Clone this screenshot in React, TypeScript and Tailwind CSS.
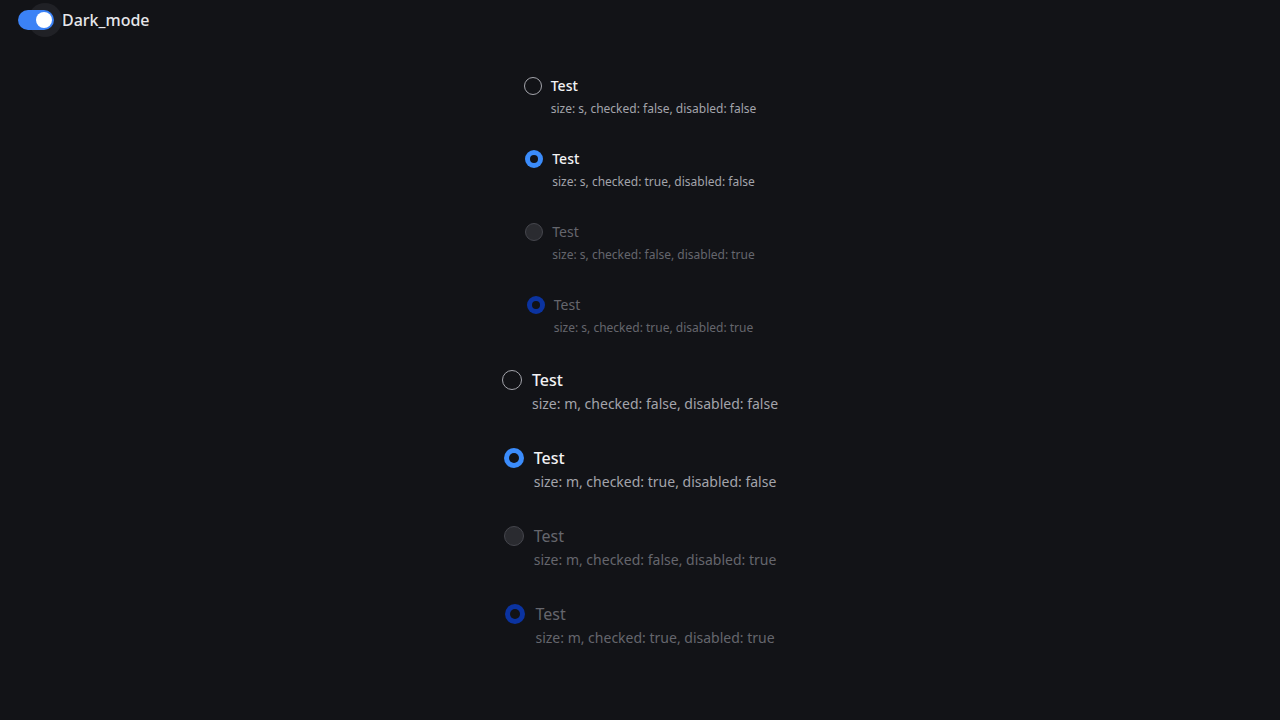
import React from "react";

type Size = "s" | "m";

const items: { size: Size; checked: boolean; disabled: boolean }[] = [
  { size: "s", checked: false, disabled: false },
  { size: "s", checked: true, disabled: false },
  { size: "s", checked: false, disabled: true },
  { size: "s", checked: true, disabled: true },
  { size: "m", checked: false, disabled: false },
  { size: "m", checked: true, disabled: false },
  { size: "m", checked: false, disabled: true },
  { size: "m", checked: true, disabled: true },
];

function Circle({ size, checked, disabled }: { size: Size; checked: boolean; disabled: boolean }) {
  const dim = size === "s" ? "w-[18px] h-[18px] mt-px" : "w-5 h-5 mt-[2px]";
  if (checked) {
    return (
      <span
        className={`${dim} shrink-0 rounded-full flex items-center justify-center ${
          disabled ? "bg-[#0b33a0]" : "bg-[#3b8cfb]"
        }`}
      >
        <span className={`${size === "s" ? "w-2 h-2" : "w-[10px] h-[10px]"} rounded-full bg-[#121317]`} />
      </span>
    );
  }
  return (
    <span
      className={`${dim} shrink-0 rounded-full ${
        disabled ? "bg-[#2a2b30] border border-[#45464d]" : "border-[1.5px] border-[#a4a5ac]"
      }`}
    />
  );
}

function RadioItem({ size, checked, disabled }: { size: Size; checked: boolean; disabled: boolean }) {
  const small = size === "s";
  return (
    <label className={`flex items-start ${small ? "gap-[9px]" : "gap-[10px]"}`}>
      <Circle size={size} checked={checked} disabled={disabled} />
      <div className="flex flex-col">
        <span
          className={`${small ? "text-[14px] leading-5" : "text-[16px] leading-6"} ${
            disabled ? "text-[#65666d] font-normal" : "text-[#f2f2f4] font-medium"
          }`}
        >
          Test
        </span>
        <span
          className={`${small ? "text-[12px] leading-[17px] mt-[4px]" : "text-[14px] leading-5 mt-[2px]"} ${
            disabled ? "text-[#65666d]" : "text-[#a3a4ab]"
          }`}
        >
          size: {size}, checked: {String(checked)}, disabled: {String(disabled)}
        </span>
      </div>
    </label>
  );
}

export default function App() {
  return (
    <div className="min-h-screen bg-[#121317] font-['Noto_Sans',sans-serif]">
      {/* header toggle */}
      <div className="h-10 flex items-center pl-[18px] gap-2">
        <div className="relative w-9 h-5">
          <span className="absolute left-[10px] top-[-7px] w-[34px] h-[34px] rounded-full bg-[#202126]" />
          <span className="absolute inset-0 rounded-full bg-[#3b82f6]" />
          <span className="absolute right-[2px] top-[2px] w-4 h-4 rounded-full bg-white" />
        </div>
        <span className="text-[16px] font-medium text-[#e6e6ea]">Dark_mode</span>
      </div>

      <div className="flex flex-col items-center gap-8 pt-9">
        {items.map((it, i) => (
          <RadioItem key={i} {...it} />
        ))}
      </div>
    </div>
  );
}
